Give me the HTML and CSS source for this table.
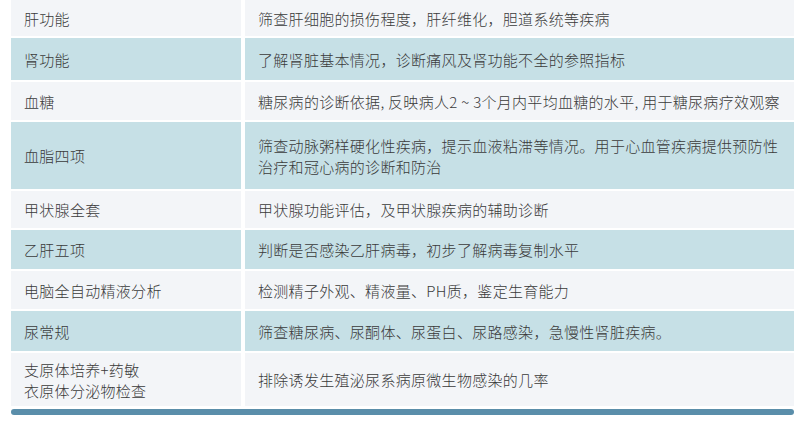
FILE: index.html
```html
<!DOCTYPE html>
<html lang="zh-CN">
<head>
<meta charset="utf-8">
<title>检查项目</title>
<link rel="stylesheet" href="styles.css">
</head>
<body>
<div class="wrap">
  <div class="grid">
    <div class="cell light">肝功能</div>
    <div class="cell light">筛查肝细胞的损伤程度，肝纤维化，胆道系统等疾病</div>
    <div class="cell dark">肾功能</div>
    <div class="cell dark">了解肾脏基本情况，诊断痛风及肾功能不全的参照指标</div>
    <div class="cell light">血糖</div>
    <div class="cell light">糖尿病的诊断依据, 反映病人2 ~ 3个月内平均血糖的水平, 用于糖尿病疗效观察</div>
    <div class="cell dark">血脂四项</div>
    <div class="cell dark">筛查动脉粥样硬化性疾病，提示血液粘滞等情况。用于心血管疾病提供预防性<br>治疗和冠心病的诊断和防治</div>
    <div class="cell light">甲状腺全套</div>
    <div class="cell light">甲状腺功能评估，及甲状腺疾病的辅助诊断</div>
    <div class="cell dark">乙肝五项</div>
    <div class="cell dark">判断是否感染乙肝病毒，初步了解病毒复制水平</div>
    <div class="cell light">电脑全自动精液分析</div>
    <div class="cell light">检测精子外观、精液量、PH质，鉴定生育能力</div>
    <div class="cell dark">尿常规</div>
    <div class="cell dark">筛查糖尿病、尿酮体、尿蛋白、尿路感染，急慢性肾脏疾病。</div>
    <div class="cell light">支原体培养+药敏<br>衣原体分泌物检查</div>
    <div class="cell light">排除诱发生殖泌尿系病原微生物感染的几率</div>
  </div>
  <div class="bar"></div>
</div>
</body>
</html>
```
FILE: styles.css
```css
html, body {
  margin: 0;
  padding: 0;
  background: #ffffff;
}
body {
  font-family: "Noto Sans CJK SC", "Noto Sans", sans-serif;
  font-size: 15px;
  font-weight: 300;
  letter-spacing: 0.3px;
  color: #3a3a3a;
}
.wrap {
  width: 783px;
  margin-left: 11px;
}
.grid {
  display: grid;
  grid-template-columns: 230px 549px;
  grid-template-rows: 36px 42px 38px 67px 37px 39px 38px 40px 53px;
  column-gap: 4px;
  row-gap: 2px;
}
.cell {
  display: flex;
  align-items: center;
  padding-left: 13px;
  line-height: 21px;
  white-space: nowrap;
  overflow: hidden;
}
.light {
  background: #f3f5f8;
}
.dark {
  background: #c6e0e6;
}
.bar {
  margin-top: 3px;
  height: 6px;
  border-radius: 3px;
  background: #5a8eaa;
}
```
